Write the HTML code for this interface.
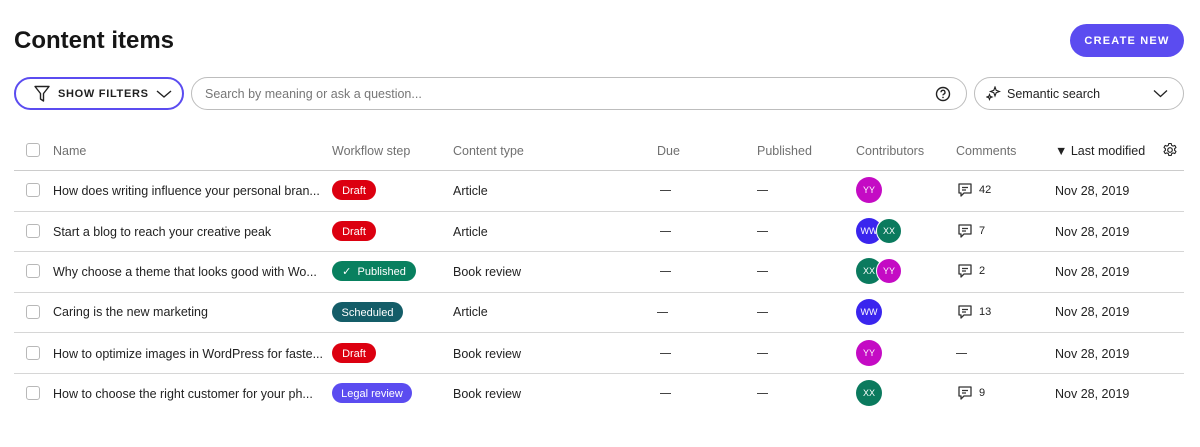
<!DOCTYPE html>
<html><head><style>
*{box-sizing:border-box;margin:0;padding:0}
body{width:1200px;height:447px;background:#fff;font-family:"Liberation Sans",sans-serif;color:#1f1f1f;position:relative;overflow:hidden}
.abs{position:absolute}
h1{position:absolute;left:14px;top:27px;font-size:24px;font-weight:700;color:#161616}
.create{left:1070px;top:24px;width:114px;height:33px;border-radius:17px;background:#5b4cf0;color:#fff;font-size:11px;font-weight:700;letter-spacing:1.2px;display:flex;align-items:center;justify-content:center}
.filt{left:14px;top:77px;width:170px;height:33px;border:2px solid #5b4cf0;border-radius:17px;display:flex;align-items:center;padding-left:18px;font-size:11px;font-weight:700;letter-spacing:0.7px}
.search{left:191px;top:77px;width:776px;height:33px;border:1px solid #bdbdbd;border-radius:17px;font-size:12.5px;color:#777;padding:9px 0 0 13px}
.sem{left:974px;top:77px;width:210px;height:33px;border:1px solid #bdbdbd;border-radius:17px;font-size:12.5px;color:#222;padding:9px 0 0 32px}
.hd{top:144px;font-size:12.5px;color:#707070}
.line{left:14px;width:1170px;height:1px;background:#d6d6d6}
.cb{left:26px;width:14px;height:14px;border:1px solid #b8b8b8;border-radius:3px}
.t{font-size:12.5px;color:#222}
.b{height:20px;border-radius:10px;color:#fff;font-size:11px;display:flex;align-items:center;justify-content:center;line-height:20px;padding-top:1px}
.av{width:26px;height:26px;border-radius:50%;color:#fff;font-size:9px;display:flex;align-items:center;justify-content:center}
.dash{width:11px;height:1px;background:#444}
</style></head><body>
<h1>Content items</h1>
<div class="abs create">CREATE NEW</div>
<div class="abs filt"><svg width="16" height="18" viewBox="0 0 16 18" style="margin-right:8px"><path d="M1 1.5h14L9.5 8.5v7.5l-3-2v-5.5z" fill="none" stroke="#222" stroke-width="1.4" stroke-linejoin="round"/></svg>SHOW FILTERS<svg width="16" height="10" viewBox="0 0 16 10" style="margin-left:7px"><path d="M1 2l7 6 7-6" fill="none" stroke="#222" stroke-width="1.4"/></svg></div>
<div class="abs search">Search by meaning or ask a question...</div>
<svg class="abs" style="left:935px;top:86px" width="16" height="16" viewBox="0 0 16 16"><circle cx="8" cy="8" r="6.5" fill="none" stroke="#222" stroke-width="1.4"/><path d="M6 6.3a2 2 0 1 1 2.6 1.9c-.5.2-.6.5-.6 1.2" fill="none" stroke="#222" stroke-width="1.3"/><circle cx="8" cy="11.4" r=".8" fill="#222"/></svg>
<div class="abs sem">Semantic search</div>
<svg class="abs" style="left:986px;top:86px" width="15" height="15" viewBox="0 0 15 15"><path d="M9 1l1.2 3.3L13.5 5.5 10.2 6.7 9 10 7.8 6.7 4.5 5.5 7.8 4.3zM3.5 8.5l.7 1.8 1.8.7-1.8.7-.7 1.8-.7-1.8L1 11l1.8-.7z" fill="none" stroke="#222" stroke-width="1.1"/></svg>
<svg class="abs" style="left:1153px;top:89px" width="15" height="9" viewBox="0 0 15 9"><path d="M1 1.5l6.5 6 6.5-6" fill="none" stroke="#222" stroke-width="1.3"/></svg>

<div class="abs cb" style="top:143px"></div>
<div class="abs hd" style="left:53px">Name</div>
<div class="abs hd" style="left:332px">Workflow step</div>
<div class="abs hd" style="left:453px">Content type</div>
<div class="abs hd" style="left:657px">Due</div>
<div class="abs hd" style="left:757px">Published</div>
<div class="abs hd" style="left:856px">Contributors</div>
<div class="abs hd" style="left:956px">Comments</div>
<div class="abs hd" style="left:1055px;color:#222">&#9660; Last modified</div>
<svg class="abs" style="left:1162px;top:142px" width="16" height="16" viewBox="0 0 16 16"><circle cx="8" cy="8" r="2.3" fill="none" stroke="#222" stroke-width="1.2"/><path d="M6.8 1.5h2.4l.4 1.8 1.5.8 1.7-.7 1.2 2.1-1.4 1.2v1.6l1.4 1.2-1.2 2.1-1.7-.7-1.5.8-.4 1.8H6.8l-.4-1.8-1.5-.8-1.7.7L2 9.5l1.4-1.2V6.7L2 5.5l1.2-2.1 1.7.7 1.5-.8z" fill="none" stroke="#222" stroke-width="1.1" stroke-linejoin="round"/></svg>
<div class="abs line" style="top:170px;background:#ccc"></div>

<div class="abs line" style="top:211px"></div>
<div class="abs line" style="top:251px"></div>
<div class="abs line" style="top:292px"></div>
<div class="abs line" style="top:332px"></div>
<div class="abs line" style="top:373px"></div>

<div class="abs cb" style="top:183px"></div>
<div class="abs t" style="left:53px;top:184px">How does writing influence your personal bran...</div>
<div class="abs b" style="left:332px;top:180px;width:44px;background:#dc0010">Draft</div>
<div class="abs t" style="left:453px;top:184px">Article</div>
<div class="abs dash" style="left:660px;top:190px"></div><div class="abs dash" style="left:757px;top:190px"></div>
<div class="abs av" style="left:856px;top:177px;background:#c40bc4">YY</div>
<div class="abs t" style="left:1055px;top:184px">Nov 28, 2019</div>

<div class="abs cb" style="top:224px"></div>
<div class="abs t" style="left:53px;top:225px">Start a blog to reach your creative peak</div>
<div class="abs b" style="left:332px;top:221px;width:44px;background:#dc0010">Draft</div>
<div class="abs t" style="left:453px;top:225px">Article</div>
<div class="abs dash" style="left:660px;top:231px"></div><div class="abs dash" style="left:757px;top:231px"></div>
<div class="abs av" style="left:856px;top:218px;background:#3a25ee">WW</div>
<div class="abs av" style="left:876px;top:218px;background:#0b7a5e;border:1px solid #fff">XX</div>
<div class="abs t" style="left:1055px;top:225px">Nov 28, 2019</div>

<div class="abs cb" style="top:264px"></div>
<div class="abs t" style="left:53px;top:265px">Why choose a theme that looks good with Wo...</div>
<div class="abs b" style="left:332px;top:261px;width:84px;background:#08805f">&#10003;&nbsp; Published</div>
<div class="abs t" style="left:453px;top:265px">Book review</div>
<div class="abs dash" style="left:660px;top:271px"></div><div class="abs dash" style="left:757px;top:271px"></div>
<div class="abs av" style="left:856px;top:258px;background:#0b7a5e">XX</div>
<div class="abs av" style="left:876px;top:258px;background:#c40bc4;border:1px solid #fff">YY</div>
<div class="abs t" style="left:1055px;top:265px">Nov 28, 2019</div>

<div class="abs cb" style="top:305px"></div>
<div class="abs t" style="left:53px;top:305px">Caring is the new marketing</div>
<div class="abs b" style="left:332px;top:302px;width:71px;background:#145d68">Scheduled</div>
<div class="abs t" style="left:453px;top:305px">Article</div>
<div class="abs dash" style="left:657px;top:312px"></div><div class="abs dash" style="left:757px;top:312px"></div>
<div class="abs av" style="left:856px;top:299px;background:#3a25ee">WW</div>
<div class="abs t" style="left:1055px;top:305px">Nov 28, 2019</div>

<div class="abs cb" style="top:346px"></div>
<div class="abs t" style="left:53px;top:347px">How to optimize images in WordPress for faste...</div>
<div class="abs b" style="left:332px;top:343px;width:44px;background:#dc0010">Draft</div>
<div class="abs t" style="left:453px;top:347px">Book review</div>
<div class="abs dash" style="left:660px;top:353px"></div><div class="abs dash" style="left:757px;top:353px"></div>
<div class="abs av" style="left:856px;top:340px;background:#c40bc4">YY</div>
<div class="abs dash" style="left:956px;top:353px"></div>
<div class="abs t" style="left:1055px;top:347px">Nov 28, 2019</div>

<div class="abs cb" style="top:386px"></div>
<div class="abs t" style="left:53px;top:387px">How to choose the right customer for your ph...</div>
<div class="abs b" style="left:332px;top:383px;width:80px;background:#5b4cf0">Legal review</div>
<div class="abs t" style="left:453px;top:387px">Book review</div>
<div class="abs dash" style="left:660px;top:393px"></div><div class="abs dash" style="left:757px;top:393px"></div>
<div class="abs av" style="left:856px;top:380px;background:#0b7a5e">XX</div>
<div class="abs t" style="left:1055px;top:387px">Nov 28, 2019</div>

<svg width="0" height="0" style="position:absolute"><defs><symbol id="cm" viewBox="0 0 16 16"><path d="M2 2h12v9H7l-3 3v-3H2z" fill="none" stroke="#333" stroke-width="1.3" stroke-linejoin="round"/><path d="M5 5.5h6M5 8h4" stroke="#333" stroke-width="1.2"/></symbol></defs></svg>
<svg class="abs" style="left:957px;top:182px" width="16" height="16"><use href="#cm"/></svg><div class="abs t" style="left:979px;top:184px;font-size:11px">42</div>
<svg class="abs" style="left:957px;top:223px" width="16" height="16"><use href="#cm"/></svg><div class="abs t" style="left:979px;top:225px;font-size:11px">7</div>
<svg class="abs" style="left:957px;top:263px" width="16" height="16"><use href="#cm"/></svg><div class="abs t" style="left:979px;top:265px;font-size:11px">2</div>
<svg class="abs" style="left:957px;top:304px" width="16" height="16"><use href="#cm"/></svg><div class="abs t" style="left:979px;top:306px;font-size:11px">13</div>
<svg class="abs" style="left:957px;top:385px" width="16" height="16"><use href="#cm"/></svg><div class="abs t" style="left:979px;top:387px;font-size:11px">9</div>
</body></html>
